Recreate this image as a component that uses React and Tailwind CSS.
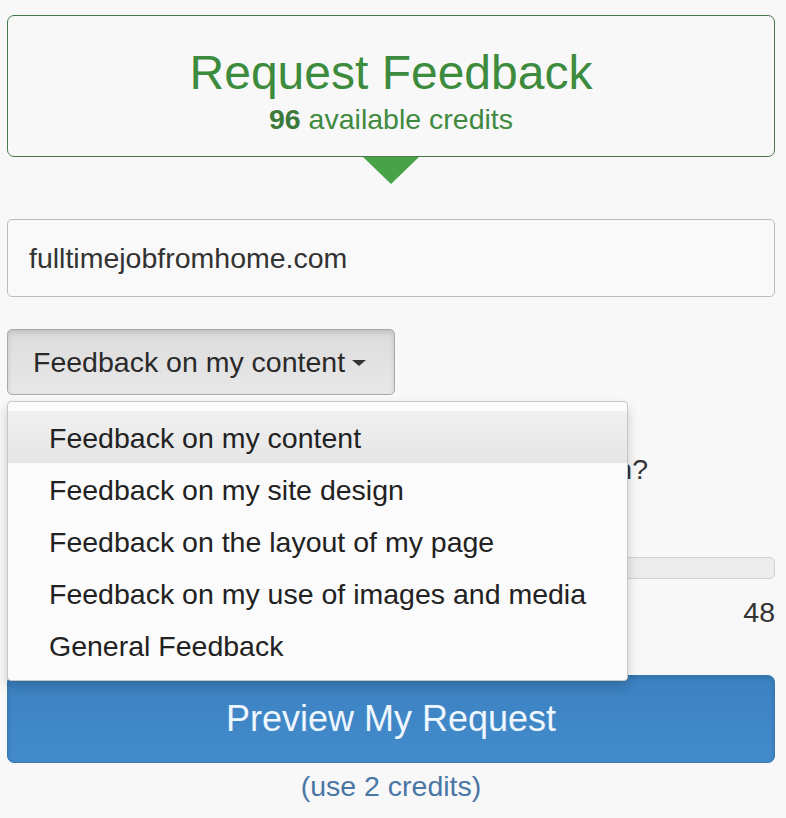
import React, { useState } from "react";

const options = [
  "Feedback on my content",
  "Feedback on my site design",
  "Feedback on the layout of my page",
  "Feedback on my use of images and media",
  "General Feedback",
];

const App = () => {
  const [selected, setSelected] = useState(options[0]);
  const [open, setOpen] = useState(true);

  return (
    <div className="min-h-screen bg-[#f8f8f8] px-[7px] pt-[15px] pb-4 font-['Liberation_Sans',Arial,sans-serif] w-[786px] pr-[11px]">
      {/* header card */}
      <div className="flex flex-col items-center">
        <div className="w-full rounded-[7px] border-[1.5px] border-[#47794a] bg-[#f8f8f8] pt-[33px] pb-[23px] text-center">
          <h1 className="text-[48px] leading-[48px] text-[#3d8b3d]">Request Feedback</h1>
          <p className="mt-[8px] text-[28.5px] leading-[28px] text-[#3f8a3f]">
            <span className="font-bold text-[#3b7a3b]">96</span> available credits
          </p>
        </div>
        <div className="h-0 w-0 border-x-[28px] border-t-[27px] border-x-transparent border-t-[#48a248]" />
      </div>

      {/* url input */}
      <input
        type="text"
        defaultValue="fulltimejobfromhome.com"
        className="mt-[35px] block h-[78px] w-full rounded-[5px] border border-[#bcbcbc] bg-[#f9f9f9] pl-[21px] text-[28.5px] text-[#333] outline-none"
      />

      {/* feedback type dropdown */}
      <div className="relative mt-[32px]">
        <button
          type="button"
          onClick={() => setOpen(!open)}
          className="flex h-[66px] w-[388px] items-center gap-[7px] rounded-[5px] border border-[#a9a9a9] bg-gradient-to-b from-[#dcdcdc] to-[#e8e8e8] pl-[25px] text-[28.5px] leading-[28px] text-[#2a2a2a] shadow-[inset_0_3px_5px_rgba(0,0,0,0.125)]"
        >
          {selected}
          <span className="mt-[2px] h-0 w-0 border-x-[7px] border-t-[6px] border-x-transparent border-t-[#333]" />
        </button>

        {open && (
          <ul className="absolute left-0 top-[72px] z-10 w-[621px] rounded-[4px] border border-[#c6c6c6] bg-[#fbfbfb] py-[9px] shadow-[0_6px_12px_rgba(0,0,0,0.175)]">
            {options.map((opt) => (
              <li
                key={opt}
                onClick={() => {
                  setSelected(opt);
                  setOpen(false);
                }}
                className={`h-[52px] pl-[41px] text-[28.5px] leading-[54px] text-[#222] ${
                  opt === selected ? "bg-gradient-to-b from-[#f0f0f0] to-[#e6e6e6]" : ""
                }`}
              >
                {opt}
              </li>
            ))}
          </ul>
        )}
      </div>

      {/* question + length (under the menu) */}
      <div className="mt-[60px] w-[641px] text-right text-[28.5px] leading-[28px] text-[#333]">
        Do you have a specific question?
      </div>
      <div className="mt-[74px] h-[22px] w-full rounded-[5px] border border-[#d0d0d0] bg-[#ececec]" />
      <div className="mt-[19px] text-right text-[28.5px] leading-[28px] text-[#333]">48</div>

      {/* submit */}
      <button
        type="button"
        className="mt-[49px] h-[88px] w-full rounded-[7px] border border-[#3777b2] bg-gradient-to-b from-[#3c82c2] to-[#438bcb] text-[36px] leading-[36px] text-[#eef6ff] shadow-[inset_0_2px_4px_rgba(0,0,0,0.15)]"
      >
        Preview My Request
      </button>
      <p className="mt-[9px] text-center text-[28.5px] leading-[28px] text-[#4a76a6]">(use 2 credits)</p>
    </div>
  );
};

export default App;
